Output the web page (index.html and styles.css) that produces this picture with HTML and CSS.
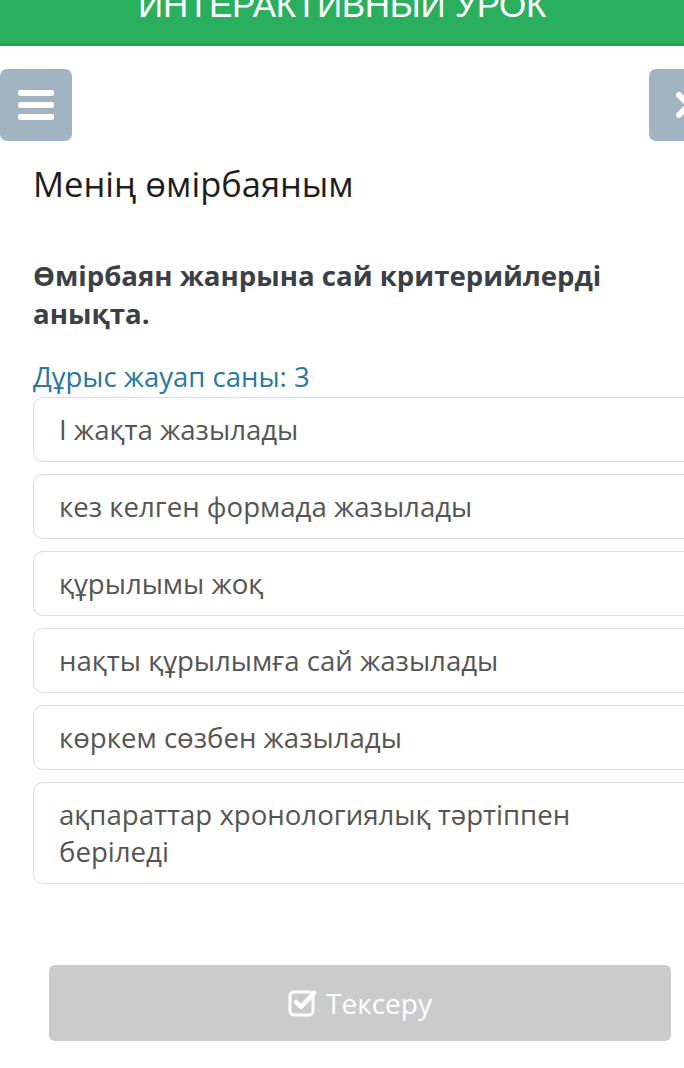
FILE: index.html
```html
<!DOCTYPE html>
<html lang="kk">
<head>
<meta charset="UTF-8" />
<meta name="viewport" content="width=device-width, initial-scale=1" />
<title>Интерактивный урок</title>
<link rel="stylesheet" href="styles.css">
</head>
<body>

<header class="top-bar">
  <div class="top-title">ИНТЕРАКТИВНЫЙ УРОК</div>
</header>

<div class="toolbar">
  <button class="tool-btn" aria-label="Мәзір">
    <svg width="36" height="30" viewBox="0 0 36 30">
      <rect x="0" y="0" width="36" height="6" rx="2" fill="#fff" />
      <rect x="0" y="12" width="36" height="6" rx="2" fill="#fff" />
      <rect x="0" y="24" width="36" height="6" rx="2" fill="#fff" />
    </svg>
  </button>
  <button class="tool-btn" aria-label="Келесі">
    <svg width="30" height="30" viewBox="0 0 30 30">
      <path d="M9 5 L19 15 L9 25" fill="none" stroke="#fff" stroke-width="6" stroke-linecap="round" stroke-linejoin="round" />
    </svg>
  </button>
</div>

<main class="content">
  <h1 class="lesson-title">Менің өмірбаяным</h1>

  <p class="question">Өмірбаян жанрына сай критерийлерді анықта.</p>

  <div class="answer-count">Дұрыс жауап саны: 3</div>

  <ul class="options">
    <li class="option">І жақта жазылады</li>
    <li class="option">кез келген формада жазылады</li>
    <li class="option">құрылымы жоқ</li>
    <li class="option">нақты құрылымға сай жазылады</li>
    <li class="option">көркем сөзбен жазылады</li>
    <li class="option">ақпараттар хронологиялық тәртіппен беріледі</li>
  </ul>

  <button class="check-btn" disabled>
    <svg width="30" height="30" viewBox="0 0 30 30">
      <rect x="2" y="4" width="23" height="23" rx="4" fill="none" stroke="#fff" stroke-width="3" />
      <path d="M8 14 L13 19 L26 5" fill="none" stroke="#fff" stroke-width="4.5" stroke-linecap="round" stroke-linejoin="round" />
    </svg>
    Тексеру
  </button>
</main>

</body>
</html>
```

FILE: styles.css
```css
html, body {
  overflow-x: hidden;
}
body {
  margin: 0;
  background: #fff;
  font-family: 'Open Sans', 'Noto Sans', sans-serif;
  color: #222;
}
.top-bar {
  height: 43px;
  background: #2aaf5f;
  border-bottom: 3px solid #25a055;
  overflow: hidden;
  text-align: center;
}
.top-title {
  font-family: 'Liberation Sans', Arial, sans-serif;
  font-size: 35px;
  line-height: 35px;
  margin-top: -13px;
  color: #fff;
  letter-spacing: -0.3px;
}
.toolbar {
  display: flex;
  justify-content: space-between;
  margin: 23px -37px 0 0;
}
.tool-btn {
  width: 72px;
  height: 72px;
  border: none;
  border-radius: 7px;
  background: #a2b4c1;
  display: flex;
  align-items: center;
  justify-content: center;
  padding: 0;
}
.content {
  padding: 0 0 0 33px;
}
.lesson-title {
  font-size: 34.5px;
  font-weight: 400;
  line-height: 40px;
  margin: 23px 0 0;
  color: #1e1e1e;
}
.question {
  font-size: 27.6px;
  font-weight: 700;
  line-height: 38px;
  color: #3b4046;
  margin: 52px 0 0;
  padding-right: 40px;
}
.answer-count {
  font-size: 27.5px;
  line-height: 36px;
  color: #2878a0;
  margin-top: 27px;
}
.options {
  list-style: none;
  margin: 2px -30px 0 0;
  padding: 0;
  display: flex;
  flex-direction: column;
  gap: 12px;
}
.option {
  border: 1px solid #dcdcdc;
  border-radius: 10px;
  padding: 13px 120px 13px 25px;
  font-size: 27.6px;
  line-height: 37px;
  color: #555;
}
.check-btn {
  display: flex;
  align-items: center;
  justify-content: center;
  gap: 8px;
  width: 622px;
  height: 76px;
  margin: 81px 0 0 16px;
  border: none;
  border-radius: 6px;
  background: #cbcbcb;
  color: #fff;
  font-family: 'Open Sans', 'Noto Sans', sans-serif;
  font-size: 28px;
}
```
